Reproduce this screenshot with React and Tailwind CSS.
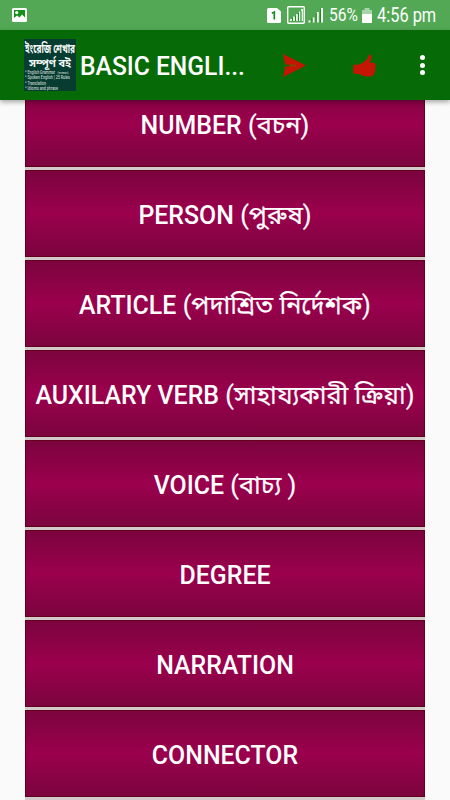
import React from 'react';

const topics = [
  { id: 1, title: 'NUMBER', meaning: '(বচন)' },
  { id: 2, title: 'PERSON', meaning: '(পুরুষ)' },
  { id: 3, title: 'ARTICLE', meaning: '(পদাশ্রিত নির্দেশক)' },
  { id: 4, title: 'AUXILARY VERB', meaning: '(সাহায্যকারী ক্রিয়া)' },
  { id: 5, title: 'VOICE', meaning: '(বাচ্য )' },
  { id: 6, title: 'DEGREE' },
  { id: 7, title: 'NARRATION' },
  { id: 8, title: 'CONNECTOR' },
];

function StatusBar() {
  return (
    <div className="flex h-[30px] shrink-0 items-center bg-[#52a855] pl-3 pr-[13px] text-white">
      <svg width="15" height="14" viewBox="0 0 15 14">
        <rect width="15" height="14" rx="1.5" fill="#fff" />
        <path d="M2 2h11v7.5l-3-3-2.5 3L5 7.5 2 10z" fill="#159018" />
        <circle cx="4.7" cy="4.6" r="1.6" fill="#fff" />
      </svg>
      <div className="ml-auto flex items-center">
        <svg width="14" height="15" viewBox="0 0 14 15">
          <path d="M1.5 0H10l4 3.5v10a1.5 1.5 0 0 1-1.5 1.5h-11A1.5 1.5 0 0 1 0 13.5v-12A1.5 1.5 0 0 1 1.5 0z" fill="#fff" />
          <path d="M4.8 5.2 7.3 4v7.5" fill="none" stroke="#159018" strokeWidth="1.7" />
        </svg>
        <svg className="ml-1.5" width="18" height="18" viewBox="0 0 18 18">
          <rect x=".7" y=".7" width="16.6" height="16.6" rx="1" fill="none" stroke="#fff" strokeWidth="1.4" />
          <path d="M4 15v-2M7 15v-4.5M10 15V8M12.8 15V5.5M15 15V3" stroke="#fff" strokeWidth="1.7" />
          <path d="M5.5 15v-3M8.5 15v-5M11.4 15V7M14 15V5" stroke="#159018" strokeWidth="1" />
        </svg>
        <svg className="ml-[3px]" width="16" height="16" viewBox="0 0 16 16">
          <path d="M1.5 15.5v-2M5.5 15.5v-5M9.7 15.5V5M14 15.5V1" stroke="#fff" strokeWidth="2" />
          <path d="M4 15.5v-5M8.2 15.5V6M12.5 15.5V2" stroke="#159018" strokeWidth="1" />
        </svg>
        <span className="ml-[5px] w-[29px] whitespace-nowrap text-[18.5px] leading-[30px]">
          <span className="inline-block origin-left scale-x-[0.84]">56%</span>
        </span>
        <svg className="ml-1" width="10" height="15" viewBox="0 0 10 15">
          <path d="M2.5 0h5v2H10v4H0V2h2.5z" fill="#a8d4a9" />
          <rect y="6" width="10" height="9" rx=".8" fill="#fff" />
        </svg>
        <span className="ml-[5px] w-[60px] whitespace-nowrap text-[19.5px] leading-[30px]">
          <span className="inline-block origin-left scale-x-[0.84] pt-px">4:56 pm</span>
        </span>
      </div>
    </div>
  );
}

function AppLogo() {
  return (
    <svg className="shrink-0 bg-[#073c31]" width="52" height="52" viewBox="0 0 52 52" fill="#f3f7f5">
      <text x="1" y="13.5" fontSize="12" fontWeight="700" textLength="50" lengthAdjust="spacingAndGlyphs">ইংরেজি শেখার</text>
      <text x="5" y="27.5" fontSize="10.5" fontWeight="700" textLength="42" lengthAdjust="spacingAndGlyphs">সম্পূর্ণ বই</text>
      <g fill="#c3d3ce" fontSize="4.6" fontWeight="500">
        <text x="1" y="35" textLength="30" lengthAdjust="spacingAndGlyphs">* English Grammar</text>
        <text x="33.5" y="35" fontSize="3" textLength="11" lengthAdjust="spacingAndGlyphs">(ব্যাকরণ)</text>
        <text x="1" y="40.4" textLength="45" lengthAdjust="spacingAndGlyphs">* Spoken English | 25 Rules</text>
        <text x="1" y="45.7" textLength="21" lengthAdjust="spacingAndGlyphs">* Translation</text>
        <text x="1" y="50.8" textLength="33" lengthAdjust="spacingAndGlyphs">* Idioms and phrase</text>
      </g>
    </svg>
  );
}

function Toolbar() {
  return (
    <header className="relative z-10 flex h-[70px] shrink-0 items-center bg-[#066b06] pl-6 pr-[25px] shadow-[0_2px_5px_rgba(0,0,0,0.35)]">
      <AppLogo />
      <h1 className="ml-1 w-[166px] whitespace-nowrap pt-[3px] text-[25px] font-medium text-white">
        <span className="inline-block origin-left scale-x-[0.985]">BASIC ENGLI...</span>
      </h1>
      <button type="button" className="ml-[37px]" aria-label="Send">
        <svg width="23" height="23" viewBox="0 0 23 23">
          <path d="M0 0 23 11.5 0 23 2.3 12.5 2.3 10.5z" fill="#c51605" />
          <path d="M2 11.5h4" stroke="#066b06" strokeWidth="1.8" />
          <path d="M6 11.5h7" stroke="#7a4a05" strokeWidth="1.8" />
        </svg>
      </button>
      <button type="button" className="ml-[47px]" aria-label="Like">
        <svg width="23" height="23" viewBox="0 0 23 23">
          <path d="M.3 10.7C4 11 7.5 10.5 10 8.5c2.500-1.500 4-3 4.800-5C15.3 2 16 .6 17 .5c1.5 0 1.9 1.5 1.6 3-.3 2-1.5 3.700-1.800 5.200 1.900.2 4.400-.2 5.400.8.7.9.7 2.200.3 3-.1 2.500-.3 5-1.300 7-.6 1.500-1.500 2.600-3 2.800-3.200.4-6.200.1-8.400-.5-1.500-.4-2.500-1.500-4-1.700L.3 19.500z" fill="#c51605" />
        </svg>
      </button>
      <button type="button" className="ml-auto flex flex-col gap-[2.5px]" aria-label="More">
        <span className="h-[5px] w-[5px] rounded-full bg-white" />
        <span className="h-[5px] w-[5px] rounded-full bg-white" />
        <span className="h-[5px] w-[5px] rounded-full bg-white" />
      </button>
    </header>
  );
}

function TopicButton({ title, meaning }) {
  return (
    <button
      type="button"
      className="flex h-[90px] w-full shrink-0 flex-col border-b-3 border-[#d3cbcb]"
    >
      <span className="flex w-full flex-1 items-center justify-center border border-[#65001a] bg-linear-to-b from-[#7b043e] via-[#9b004d] to-[#7b043e] pt-[5px] text-[24.9px] font-medium text-white">
        <span className="whitespace-nowrap">
          {title}
          {meaning && (
            <span className="text-[25.3px] leading-none font-normal [-webkit-text-stroke:0.2px_white]">
              {' '}
              {meaning}
            </span>
          )}
        </span>
      </span>
    </button>
  );
}

function App() {
  return (
    <div className="flex h-[800px] w-[450px] flex-col overflow-hidden bg-[#fafafa] font-[Roboto,'Noto_Sans_Bengali','Noto_Sans',sans-serif]">
      <StatusBar />
      <Toolbar />
      <main className="flex min-h-0 flex-1 flex-col overflow-hidden px-[25px]">
        <div className="-mt-5 flex flex-col">
          {topics.map((topic) => (
            <TopicButton
              key={topic.id}
              title={topic.title}
              meaning={topic.meaning}
            />
          ))}
        </div>
      </main>
    </div>
  );
}

export default App;
